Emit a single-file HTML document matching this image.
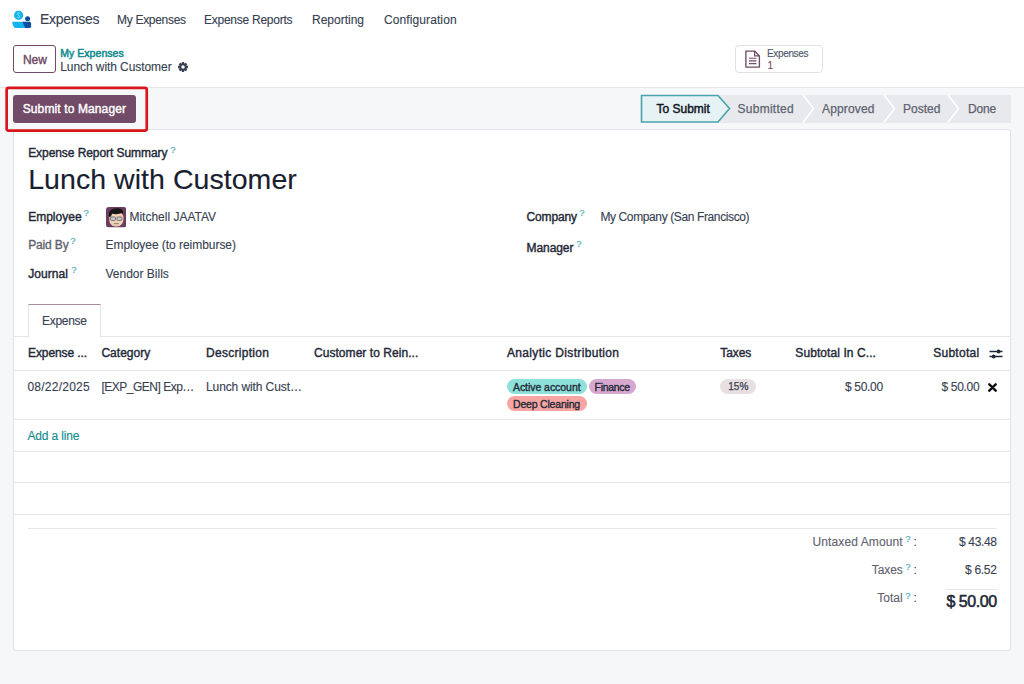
<!DOCTYPE html>
<html><head><meta charset="utf-8">
<style>
html,body{margin:0;padding:0;width:1024px;height:684px;overflow:hidden;background:#f6f7f9;font-family:"Liberation Sans",sans-serif;color:#374151}
.a{position:absolute}
.t{position:absolute;line-height:1;white-space:nowrap}
.q{color:#4aa7b2;font-size:9.5px;position:absolute;line-height:1;-webkit-text-stroke:0.15px #4aa7b2}
.tag{position:absolute;height:15px;border-radius:8px;font-size:10.5px;line-height:16.6px;text-align:center;color:#1f2937;white-space:nowrap;-webkit-text-stroke:0.35px #1f2937}
</style></head><body>
<div class="a" style="left:0;top:0;width:1024px;height:87px;background:#fff;border-bottom:1px solid #e3e5e9"></div>
<svg class="a" style="left:8px;top:6px" width="28" height="26" viewBox="0 0 28 26">
  <circle cx="10.6" cy="9.3" r="4.6" fill="#13b5ef"/>
  <path d="M11.6 7.3 Q10.8 6.6 9.9 7 Q9.2 7.5 9.9 8.4 L11.3 10 Q12 10.9 11.2 11.5 Q10.2 12 9.4 11.2" fill="none" stroke="#a8e6fb" stroke-width="0.9"/>
  <circle cx="19.6" cy="12.7" r="2.5" fill="#0b4f9e"/>
  <path d="M4.4 15.8 H14.6 L17.4 21.9 H8 Q5 21.9 4.4 17.2 Z" fill="#13b5ef"/>
  <path d="M14.3 15.8 H21.6 Q23.1 15.8 23.1 17.4 V20.3 Q23.1 21.9 21.6 21.9 H17.1 Z" fill="#0b4f9e"/>
</svg>
<div class="t" style="top:12.40px;font-size:14px;color:#374151;left:40.00px;letter-spacing:-0.3px;-webkit-text-stroke:0.12px #374151;">Expenses</div>
<div class="t" style="top:14.24px;font-size:12px;color:#374151;left:117.00px;letter-spacing:-0.3px;-webkit-text-stroke:0.12px #374151;">My Expenses</div>
<div class="t" style="top:14.24px;font-size:12px;color:#374151;left:204.00px;letter-spacing:-0.25px;-webkit-text-stroke:0.12px #374151;">Expense Reports</div>
<div class="t" style="top:14.24px;font-size:12px;color:#374151;left:312.00px;-webkit-text-stroke:0.12px #374151;">Reporting</div>
<div class="t" style="top:14.24px;font-size:12px;color:#374151;left:384.00px;letter-spacing:0.1px;-webkit-text-stroke:0.12px #374151;">Configuration</div>
<div class="a" style="left:13px;top:45px;width:41px;height:26px;border:1px solid #714b67;border-radius:3px;background:#fff"></div>
<div class="t" style="top:53.74px;font-size:12px;color:#714b67;left:23.00px;letter-spacing:-0.1px;-webkit-text-stroke:0.4px #714b67;">New</div>
<div class="t" style="top:47.51px;font-size:10.5px;color:#138a90;left:60.20px;letter-spacing:0.05px;-webkit-text-stroke:0.5px #138a90;">My Expenses</div>
<div class="t" style="top:60.64px;font-size:12px;color:#374151;left:60.20px;letter-spacing:-0.07px;-webkit-text-stroke:0.12px #374151;">Lunch with Customer</div>
<svg class="a" style="left:177px;top:61.1px" width="12" height="12" viewBox="0 0 12 12"><path fill="#374151" fill-rule="evenodd" d="M4.86 2.27 L4.85 1.03 L7.15 1.03 L7.14 2.27 L7.83 2.56 L8.70 1.67 L10.33 3.30 L9.44 4.17 L9.73 4.86 L10.97 4.85 L10.97 7.15 L9.73 7.14 L9.44 7.83 L10.33 8.70 L8.70 10.33 L7.83 9.44 L7.14 9.73 L7.15 10.97 L4.85 10.97 L4.86 9.73 L4.17 9.44 L3.30 10.33 L1.67 8.70 L2.56 7.83 L2.27 7.14 L1.03 7.15 L1.03 4.85 L2.27 4.86 L2.56 4.17 L1.67 3.30 L3.30 1.67 L4.17 2.56Z M7.75 6 A1.75 1.75 0 1 0 4.25 6 A1.75 1.75 0 1 0 7.75 6Z"/></svg>
<div class="a" style="left:735px;top:45px;width:86px;height:26px;border:1px solid #dfe1e5;border-radius:4px;background:#fff"></div>
<svg class="a" style="left:744px;top:50px" width="17" height="18" viewBox="0 0 17 18">
  <path d="M1.9 1.1 H10.6 L15.4 5.9 V17.1 H1.9 Z" fill="none" stroke="#714b67" stroke-width="1.35" stroke-linejoin="round"/>
  <path d="M10.6 1.1 V5.9 H15.4" fill="none" stroke="#714b67" stroke-width="1.2"/>
  <path d="M5 8.3 H12.4 M5 10.9 H12.4 M5 13.6 H12.4" stroke="#714b67" stroke-width="1.1"/>
</svg>
<div class="t" style="top:49.44px;font-size:10px;color:#4b5563;left:767.00px;letter-spacing:-0.35px;-webkit-text-stroke:0.12px #4b5563;">Expenses</div>
<div class="t" style="top:60.94px;font-size:10px;color:#714b67;left:767.50px;-webkit-text-stroke:0.12px #714b67;">1</div>
<div class="a" style="left:13px;top:95px;width:123px;height:27.5px;background:#714b67;border-radius:3px"></div>
<div class="t" style="top:103.14px;font-size:12px;color:#ffffff;left:22.70px;letter-spacing:0.12px;-webkit-text-stroke:0.4px #ffffff;">Submit to Manager</div>
<div class="a" style="left:718px;top:95px;width:293px;height:27.5px;background:#e7e9ed"></div>
<svg class="a" style="left:640px;top:94px" width="372" height="30" viewBox="0 0 372 30">
  <path d="M1.5 1.5 H78 L89.5 14.5 L78 28 H1.5 Z" fill="#e6f2f3" stroke="#4aa4aa" stroke-width="1.6"/>
  <path d="M163 1 L173.5 14.5 L163 28.5" fill="none" stroke="#fff" stroke-width="1.6"/>
  <path d="M244 1 L254.5 14.5 L244 28.5" fill="none" stroke="#fff" stroke-width="1.6"/>
  <path d="M308 1 L318.5 14.5 L308 28.5" fill="none" stroke="#fff" stroke-width="1.6"/>
</svg>
<div class="t" style="top:103.14px;font-size:12px;color:#111827;left:656.50px;-webkit-text-stroke:0.45px #111827;">To Submit</div>
<div class="t" style="top:103.14px;font-size:12px;color:#5f636f;left:737.60px;letter-spacing:0.25px;-webkit-text-stroke:0.25px #5f636f;">Submitted</div>
<div class="t" style="top:103.14px;font-size:12px;color:#5f636f;left:822.00px;letter-spacing:0.15px;-webkit-text-stroke:0.25px #5f636f;">Approved</div>
<div class="t" style="top:103.14px;font-size:12px;color:#5f636f;left:903.00px;-webkit-text-stroke:0.25px #5f636f;">Posted</div>
<div class="t" style="top:103.14px;font-size:12px;color:#5f636f;left:968.00px;letter-spacing:-0.15px;-webkit-text-stroke:0.25px #5f636f;">Done</div>
<div class="a" style="left:13px;top:129px;width:996px;height:520px;background:#fff;border:1px solid #e2e4e8;border-radius:3px"></div>
<div class="t" style="top:146.84px;font-size:12px;color:#1f2937;left:28.20px;letter-spacing:-0.07px;-webkit-text-stroke:0.4px #1f2937;">Expense Report Summary</div>
<div class="q" style="left:170.20px;top:145.20px">?</div>
<div class="t" style="top:165.07px;font-size:28.5px;color:#182030;left:28.20px;letter-spacing:0.05px;-webkit-text-stroke:0.12px #182030;">Lunch with Customer</div>
<div class="t" style="top:211.44px;font-size:12px;color:#1f2937;left:28.20px;-webkit-text-stroke:0.4px #1f2937;">Employee</div>
<div class="q" style="left:83.60px;top:208.30px">?</div>
<svg class="a" style="left:105.5px;top:207px" width="20.5" height="20.5" viewBox="0 0 20.5 20.5">
  <defs><clipPath id="av"><rect width="20.5" height="20.5" rx="3"/></clipPath></defs>
  <g clip-path="url(#av)">
  <rect width="20.5" height="20.5" fill="#6b3d63"/>
  <path d="M3.2 11 Q3 20 10.3 19.6 Q17.5 19.6 17.6 11 Q17.4 5 10.3 5 Q3.4 5 3.2 11Z" fill="#f1d0b2"/>
  <path d="M2.8 9 Q2.6 1.2 10.5 1.2 Q17.8 1.2 17.4 6.6 L16 6 Q12 7.8 6 6.8 L5 9.5 Q3.3 10.2 2.8 9Z" fill="#161616"/>
  <rect x="4.6" y="10" width="4.9" height="3.4" rx="0.8" fill="#c9cad6" stroke="#6a6a6a" stroke-width="0.9"/>
  <rect x="11" y="10" width="4.9" height="3.4" rx="0.8" fill="#c9cad6" stroke="#6a6a6a" stroke-width="0.9"/>
  <path d="M8 16.6 H12.6" stroke="#8a8a8a" stroke-width="1.2"/>
  </g>
</svg>
<div class="t" style="top:211.44px;font-size:12px;color:#374151;left:129.40px;-webkit-text-stroke:0.12px #374151;">Mitchell JAATAV</div>
<div class="t" style="top:239.04px;font-size:12px;color:#5f636f;left:28.20px;letter-spacing:-0.15px;-webkit-text-stroke:0.35px #5f636f;">Paid By</div>
<div class="q" style="left:70.20px;top:236.30px">?</div>
<div class="t" style="top:239.04px;font-size:12px;color:#374151;left:105.50px;letter-spacing:-0.04px;-webkit-text-stroke:0.12px #374151;">Employee (to reimburse)</div>
<div class="t" style="top:267.64px;font-size:12px;color:#1f2937;left:28.20px;letter-spacing:0.05px;-webkit-text-stroke:0.4px #1f2937;">Journal</div>
<div class="q" style="left:71.20px;top:264.80px">?</div>
<div class="t" style="top:267.64px;font-size:12px;color:#374151;left:105.50px;-webkit-text-stroke:0.12px #374151;">Vendor Bills</div>
<div class="t" style="top:211.44px;font-size:12px;color:#1f2937;left:526.50px;letter-spacing:-0.15px;-webkit-text-stroke:0.4px #1f2937;">Company</div>
<div class="q" style="left:579.20px;top:207.80px">?</div>
<div class="t" style="top:211.44px;font-size:12px;color:#374151;left:600.40px;letter-spacing:-0.38px;-webkit-text-stroke:0.12px #374151;">My Company (San Francisco)</div>
<div class="t" style="top:241.84px;font-size:12px;color:#1f2937;left:526.50px;letter-spacing:-0.07px;-webkit-text-stroke:0.4px #1f2937;">Manager</div>
<div class="q" style="left:576.20px;top:238.80px">?</div>
<div class="a" style="left:14px;top:336px;width:996px;height:1px;background:#e4e6ea"></div>
<div class="a" style="left:28px;top:304px;width:71px;height:33px;background:#fff;border-left:1px solid #e2e4e8;border-right:1px solid #e2e4e8;border-top:1px solid #a98aa1"></div>
<div class="t" style="top:314.54px;font-size:12px;color:#374151;left:42.00px;letter-spacing:-0.3px;-webkit-text-stroke:0.12px #374151;">Expense</div>
<div class="t" style="top:347.34px;font-size:12px;color:#1f2937;left:28.00px;letter-spacing:-0.1px;-webkit-text-stroke:0.4px #1f2937;">Expense ...</div>
<div class="t" style="top:347.34px;font-size:12px;color:#1f2937;left:101.40px;letter-spacing:0.03px;-webkit-text-stroke:0.4px #1f2937;">Category</div>
<div class="t" style="top:347.34px;font-size:12px;color:#1f2937;left:206.00px;letter-spacing:0.28px;-webkit-text-stroke:0.4px #1f2937;">Description</div>
<div class="t" style="top:347.34px;font-size:12px;color:#1f2937;left:314.00px;letter-spacing:0.05px;-webkit-text-stroke:0.4px #1f2937;">Customer to Rein...</div>
<div class="t" style="top:347.34px;font-size:12px;color:#1f2937;left:507.00px;letter-spacing:0.33px;-webkit-text-stroke:0.4px #1f2937;">Analytic Distribution</div>
<div class="t" style="top:347.34px;font-size:12px;color:#1f2937;left:720.30px;letter-spacing:-0.1px;-webkit-text-stroke:0.4px #1f2937;">Taxes</div>
<div class="t" style="top:347.34px;font-size:12px;color:#1f2937;left:795.30px;letter-spacing:0.08px;-webkit-text-stroke:0.4px #1f2937;">Subtotal In C...</div>
<div class="t" style="top:347.34px;font-size:12px;color:#1f2937;right:44.70px;letter-spacing:0.25px;-webkit-text-stroke:0.4px #1f2937;">Subtotal</div>
<svg class="a" style="left:989px;top:348px" width="14" height="12" viewBox="0 0 14 12">
  <path d="M0.5 3.5 H13.5 M0.5 8.5 H13.5" stroke="#1f2937" stroke-width="1.3"/>
  <circle cx="9.6" cy="3.5" r="1.9" fill="#1f2937"/>
  <circle cx="4.7" cy="8.5" r="1.9" fill="#1f2937"/>
</svg>
<div class="a" style="left:14px;top:370px;width:996px;height:1px;background:#e4e6ea"></div>
<div class="t" style="top:381.34px;font-size:12px;color:#374151;left:27.40px;letter-spacing:0.25px;-webkit-text-stroke:0.12px #374151;">08/22/2025</div>
<div class="t" style="top:381.34px;font-size:12px;color:#374151;left:101.50px;letter-spacing:-0.5px;-webkit-text-stroke:0.12px #374151;">[EXP_GEN] Exp…</div>
<div class="t" style="top:381.34px;font-size:12px;color:#374151;left:206.00px;letter-spacing:-0.1px;-webkit-text-stroke:0.12px #374151;">Lunch with Cust…</div>
<div class="tag" style="left:506.5px;top:379.3px;width:80.5px;background:#8ee0da;letter-spacing:-0.05px">Active account</div>
<div class="tag" style="left:588.75px;top:379.3px;width:47px;background:#d7a8cf;letter-spacing:-0.3px">Finance</div>
<div class="tag" style="left:506.5px;top:396px;width:80px;background:#f7a5a3;letter-spacing:-0.2px">Deep Cleaning</div>
<div class="tag" style="left:720.3px;top:379.2px;width:36px;background:#e8dfe1;font-size:10px;color:#374151;-webkit-text-stroke:0.25px #374151">15%</div>
<div class="t" style="top:381.34px;font-size:12px;color:#374151;right:141.20px;letter-spacing:-0.3px;-webkit-text-stroke:0.12px #374151;">$ 50.00</div>
<div class="t" style="top:381.34px;font-size:12px;color:#374151;right:44.70px;letter-spacing:-0.3px;-webkit-text-stroke:0.12px #374151;">$ 50.00</div>
<svg class="a" style="left:988px;top:383px" width="9" height="9" viewBox="0 0 9 9"><path d="M1.3 1.3 L7.7 7.7 M7.7 1.3 L1.3 7.7" stroke="#111" stroke-width="2.4" stroke-linecap="round"/></svg>
<div class="a" style="left:14px;top:419px;width:996px;height:1px;background:#e4e6ea"></div>
<div class="t" style="top:429.84px;font-size:12px;color:#138a90;left:27.40px;letter-spacing:-0.15px;-webkit-text-stroke:0.12px #138a90;">Add a line</div>
<div class="a" style="left:14px;top:451px;width:996px;height:1px;background:#e4e6ea"></div>
<div class="a" style="left:14px;top:482px;width:996px;height:1px;background:#e4e6ea"></div>
<div class="a" style="left:14px;top:514px;width:996px;height:1px;background:#e4e6ea"></div>
<div class="a" style="left:28px;top:528px;width:969px;height:1px;background:#e4e6ea"></div>
<div class="t" style="top:535.74px;font-size:12px;color:#5f636f;right:121.30px;letter-spacing:0.1px;-webkit-text-stroke:0.12px #5f636f;">Untaxed Amount</div>
<div class="q" style="left:905.20px;top:534.30px">?</div>
<div class="t" style="top:535.74px;font-size:12px;color:#374151;left:913.50px;-webkit-text-stroke:0.12px #374151;">:</div>
<div class="t" style="top:535.74px;font-size:12px;color:#374151;right:27.40px;letter-spacing:-0.35px;-webkit-text-stroke:0.12px #374151;">$ 43.48</div>
<div class="t" style="top:563.84px;font-size:12px;color:#5f636f;right:121.30px;letter-spacing:-0.1px;-webkit-text-stroke:0.12px #5f636f;">Taxes</div>
<div class="q" style="left:905.20px;top:562.30px">?</div>
<div class="t" style="top:563.84px;font-size:12px;color:#374151;left:913.50px;-webkit-text-stroke:0.12px #374151;">:</div>
<div class="t" style="top:563.84px;font-size:12px;color:#374151;right:27.40px;letter-spacing:-0.3px;-webkit-text-stroke:0.12px #374151;">$ 6.52</div>
<div class="a" style="left:946px;top:589px;width:51px;height:1px;background:#e4e6ea"></div>
<div class="t" style="top:592.24px;font-size:12px;color:#5f636f;right:121.30px;-webkit-text-stroke:0.12px #5f636f;">Total</div>
<div class="q" style="left:905.20px;top:590.80px">?</div>
<div class="t" style="top:592.24px;font-size:12px;color:#374151;left:913.50px;-webkit-text-stroke:0.12px #374151;">:</div>
<div class="t" style="top:593.56px;font-size:16px;color:#1f2937;right:27.40px;letter-spacing:-0.45px;-webkit-text-stroke:0.55px #1f2937;">$ 50.00</div>
<svg class="a" style="left:0;top:80px" width="160" height="60"><rect x="6.65" y="7.95" width="140.1" height="42.6" rx="1.8" fill="none" stroke="#d9161b" stroke-width="2.7"/></svg>
</body></html>
